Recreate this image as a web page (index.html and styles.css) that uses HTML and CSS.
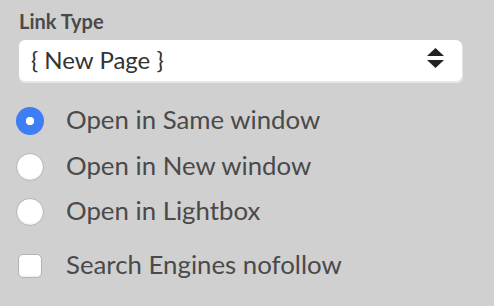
FILE: index.html
```html
<!DOCTYPE html>
<html lang="en">
<head>
    <meta charset="UTF-8">
    <title>Link Type</title>
    <link rel="stylesheet" href="styles.css">
</head>
<body>
    <form class="link-form">
        <label class="field-label" for="linkType">Link Type</label>
        <div class="select-wrap">
            <select id="linkType" class="select">
                <option>{ New Page }</option>
            </select>
            <svg class="select-arrows" width="17" height="20" viewBox="0 0 17 20">
                <polygon points="8.5,0 17,8 0,8" fill="#222"/>
                <polygon points="0,12 17,12 8.5,20" fill="#222"/>
            </svg>
        </div>

        <div class="options">
            <label class="option">
                <input type="radio" name="target" checked>
                <span>Open in Same window</span>
            </label>
            <label class="option">
                <input type="radio" name="target">
                <span>Open in New window</span>
            </label>
            <label class="option">
                <input type="radio" name="target">
                <span>Open in Lightbox</span>
            </label>
        </div>

        <label class="option option-check">
            <input type="checkbox">
            <span>Search Engines nofollow</span>
        </label>
    </form>
</body>
</html>
```

FILE: styles.css
```css
/* Colors */
:root {
    --bg-color: #d0d0d0;
    --text-color: #4a4a4a;
    --blue-color: #3d7ef4;
}

* {
    margin: 0;
    padding: 0;
    box-sizing: border-box;
}

body {
    font-family: Lato, "Open Sans", sans-serif;
    background-color: var(--bg-color);
    color: var(--text-color);
}

.link-form {
    display: flex;
    flex-direction: column;
    padding: 9px 32px 0 16px;
}

.field-label {
    font-weight: bold;
    font-size: 20px;
    line-height: 24px;
    margin-left: 3px;
}

/* Select box */
.select-wrap {
    position: relative;
    margin: 7px 0 0 3px;
    width: 443px;
    height: 41px;
}

.select {
    display: block;
    appearance: none;
    -webkit-appearance: none;
    width: 100%;
    height: 41px;
    padding: 0 40px 2px 12px;
    font-family: inherit;
    font-size: 24px;
    color: #333;
    background: #fff;
    border: none;
    border-radius: 6px;
    box-shadow: 0 2px 0 #e6e6e6, 1px 2px 0 #e6e6e6;
}

.select-arrows {
    position: absolute;
    right: 18px;
    top: 8px;
    pointer-events: none;
}

/* Radio + checkbox rows */
.options {
    display: flex;
    flex-direction: column;
    gap: 15.5px;
    margin-top: 25px;
}

.option {
    display: flex;
    align-items: center;
    gap: 22px;
    height: 30px;
    font-size: 25.8px;
    line-height: 30px;
}

.option span {
    padding-bottom: 4px;
    white-space: nowrap;
}

.option-check {
    margin-top: 24px;
}

.option input {
    appearance: none;
    -webkit-appearance: none;
    width: 28px;
    height: 28px;
    flex-shrink: 0;
    background: #fff;
    border: 1px solid #b4b4b4;
    border-radius: 50%;
    box-shadow: inset 0 -1px 2px rgba(0, 0, 0, 0.08);
}

.option input:checked {
    border: none;
    background: radial-gradient(circle, #fff 0 4px, var(--blue-color) 4.5px);
    box-shadow: none;
}

.option-check input {
    width: 24px;
    height: 24px;
    margin-left: 2px;
    margin-right: 2px;
    border-radius: 5px;
}
```
